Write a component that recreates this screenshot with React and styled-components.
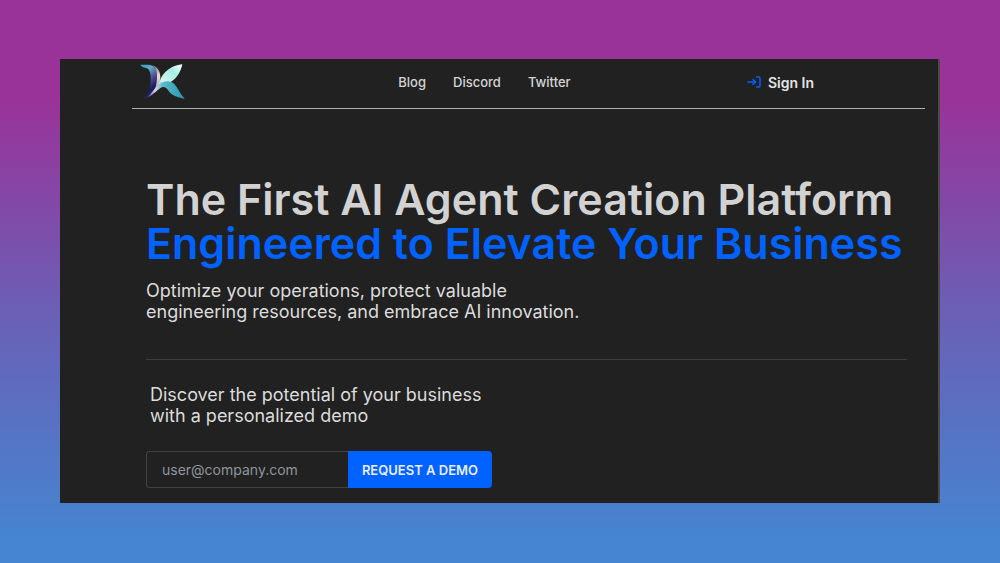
import React, { useState } from 'react';
import styled, { createGlobalStyle } from 'styled-components';

const links = ['Blog', 'Discord', 'Twitter'];

function Logo() {
  return (
    <svg width="45" height="36" viewBox="17 10 135 108" aria-hidden="true">
      <defs>
        <linearGradient id="stem" x1="0.1" y1="0" x2="0.5" y2="1">
          <stop offset="0" stopColor="#2fa3c0" />
          <stop offset="0.25" stopColor="#62aac4" />
          <stop offset="0.55" stopColor="#4a4c94" />
          <stop offset="0.8" stopColor="#1c1a5c" />
          <stop offset="1" stopColor="#2a2a80" />
        </linearGradient>
        <linearGradient id="shine" x1="0" y1="0" x2="0" y2="1">
          <stop offset="0" stopColor="#8d7d90" />
          <stop offset="0.4" stopColor="#f5dccb" />
          <stop offset="1" stopColor="#8f8cc4" />
        </linearGradient>
        <linearGradient id="leaf" x1="1" y1="0" x2="0" y2="1">
          <stop offset="0" stopColor="#ffffff" />
          <stop offset="0.3" stopColor="#a5efe3" />
          <stop offset="0.65" stopColor="#d5f2ee" />
          <stop offset="1" stopColor="#6fb9c6" />
        </linearGradient>
        <linearGradient id="leg" x1="0" y1="0.6" x2="1" y2="0.6">
          <stop offset="0" stopColor="#5a4f96" />
          <stop offset="0.2" stopColor="#dcd0dc" />
          <stop offset="0.4" stopColor="#5cbccb" />
          <stop offset="1" stopColor="#2594ab" />
        </linearGradient>
      </defs>
      <path d="M18 12H42C58 13 66 22 68 38C70 62 66 84 54 101C46 109 36 113 26 114C40 104 48 84 49 60C50 42 48 29 38 23C30 20 22 20 18 12Z" fill="url(#stem)" />
      <path d="M54 14C70 19 78 32 78 50C77 68 70 84 60 94C67 72 70 50 67 34C65 24 61 18 54 14Z" fill="url(#shine)" />
      <path d="M144 11C140 31 129 53 108 65C94 71 80 76 62 96C68 82 72 66 82 48C96 26 118 13 144 11Z" fill="url(#leaf)" />
      <path d="M40 110C52 98 60 84 70 74C88 58 108 58 120 70C132 83 138 102 151 114C128 111 112 103 103 91C96 80 88 76 78 82C66 90 56 103 40 110Z" fill="url(#leg)" />
    </svg>
  );
}

function SignInIcon() {
  return (
    <svg width="14" height="14" viewBox="0 0 14 14" fill="none" stroke="currentColor" strokeWidth="1.5" strokeLinecap="round" strokeLinejoin="round" aria-hidden="true">
      <path d="M1 7H8.5" />
      <path d="M6 4.5L8.5 7L6 9.5" />
      <path d="M9.5 2H11.5Q13 2 13 3.5V10.5Q13 12 11.5 12H9.5" />
    </svg>
  );
}

function App() {
  const [email, setEmail] = useState('');

  return (
    <>
      <GlobalStyle />
      <Page>
        <Window>
          <Header>
            <LogoLink href="#" aria-label="Home"><Logo /></LogoLink>
            <Nav>
              {links.map((link) => (
                <NavLink key={link} href="#">{link}</NavLink>
              ))}
            </Nav>
            <SignIn href="#">
              <SignInIcon />
              Sign In
            </SignIn>
          </Header>
          <Hero>
            <Title>
              The First AI Agent Creation Platform
              <Highlight>Engineered to Elevate Your Business</Highlight>
            </Title>
            <Text>
              Optimize your operations, protect valuable<br />
              engineering resources, and embrace AI innovation.
            </Text>
            <Divider />
            {/* short pitch above the demo form, it sits slightly in from the edge */}
            <Text $inset>
              Discover the potential of your business<br />
              with a personalized demo
            </Text>
            <Form onSubmit={(e) => e.preventDefault()}>
              <EmailInput
                type="email"
                aria-label="Email"
                placeholder="user@company.com"
                value={email}
                onChange={(e) => setEmail(e.target.value)}
              />
              <DemoButton type="submit">REQUEST A DEMO</DemoButton>
            </Form>
          </Hero>
        </Window>
      </Page>
    </>
  );
}

const GlobalStyle = createGlobalStyle`
  * {
    box-sizing: border-box;
  }
  body {
    margin: 0;
    font-family: Inter, sans-serif;
  }
`;

const Page = styled.div`
  min-height: 100vh;
  padding: 59px 60px 60px;
  background: linear-gradient(#993399 18%, #6b5fb5 55%, #4585d1 96%);
`;

const Window = styled.div`
  padding: 0 13px 15px 72px;
  background: #212121;
  border-right: 2px solid #4a4a4a;
`;

const Header = styled.header`
  display: flex;
  align-items: center;
  justify-content: space-between;
  height: 50px;
  padding: 0 95px 3px 8px;
  border-bottom: 1px solid #b0b0b0;
`;

const LogoLink = styled.a`
  display: flex;
  width: 98px;
`;

const Nav = styled.nav`
  display: flex;
  gap: 27px;
`;

const NavLink = styled.a`
  color: #d4d4d4;
  font-size: 13px;
  font-weight: 500;
  text-decoration: none;
`;

const SignIn = styled.a`
  display: flex;
  align-items: center;
  gap: 7px;
  padding: 8px 16px;
  color: #e4e4e4;
  font-size: 14px;
  font-weight: 600;
  text-decoration: none;

  svg {
    color: #0062ff;
  }
`;

const Hero = styled.main`
  padding: 68px 18px 0 14px;
`;

const Title = styled.h1`
  margin: 0 0 15px;
  color: #d2d2d2;
  font-size: 43px;
  font-weight: 600;
  line-height: 44px;
`;

const Highlight = styled.span`
  display: block;
  color: #0062ff;
`;

const Text = styled.p`
  margin: 0;
  padding-left: ${({ $inset }) => ($inset ? '4px' : '0')};
  color: #dcdcdc;
  font-size: 18px;
  line-height: 21px;
`;

const Divider = styled.hr`
  margin: 37px 0 24px;
  border: 0;
  border-top: 1px solid #3c3c3c;
`;

const Form = styled.form`
  display: flex;
  width: 346px;
  max-width: 100%;
  height: 37px;
  margin-top: 25px;
`;

const EmailInput = styled.input`
  flex: 1;
  min-width: 0;
  padding: 0 15px;
  color: #dcdcdc;
  background: transparent;
  border: 1px solid #434343;
  border-right: 0;
  border-radius: 4px 0 0 4px;
  font-family: inherit;
  font-size: 14px;

  &::placeholder {
    color: #8d959c;
    opacity: 1;
  }
`;

const DemoButton = styled.button`
  padding: 0 14px;
  color: #e8edff;
  background: #0062ff;
  border: 0;
  border-radius: 0 4px 4px 0;
  font-family: inherit;
  font-size: 13px;
  font-weight: 600;
`;

export default App;
